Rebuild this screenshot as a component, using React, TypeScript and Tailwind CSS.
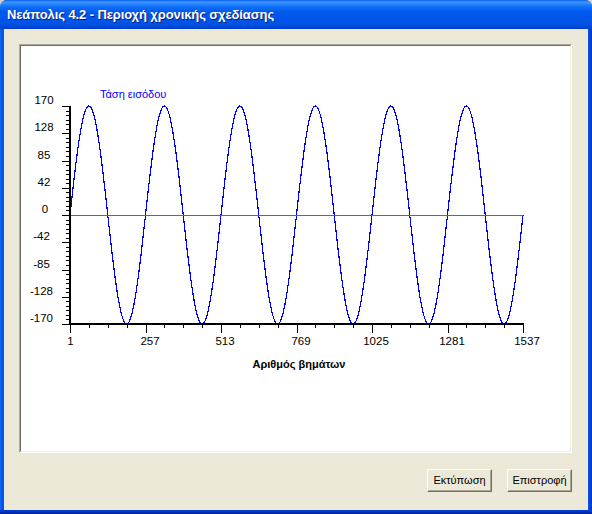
import React from "react";

const X0 = 70;
const X1 = 523;
const YT = 106;
const YB = 324;
const YZ = 215;

function Chart() {
  const pts: string[] = [];
  for (let n = 1; n <= 1537; n++) {
    const x = X0 + ((n - 1) * (X1 - X0)) / 1536;
    const y = YZ - 109 * Math.sin((2 * Math.PI * (n - 1)) / 256);
    pts.push(`${x.toFixed(2)},${y.toFixed(2)}`);
  }
  const yLabels = ["170", "128", "85", "42", "0", "-42", "-85", "-128", "-170"];
  const yStep = (YB - YT) / 8;
  const xLabels = ["1", "257", "513", "769", "1025", "1281", "1537"];
  const xStep = (X1 - X0) / 6;
  const yMinor: number[] = [];
  for (let i = 0; i <= 48; i++) yMinor.push(YT + (i * yStep) / 6);
  const xMinor: number[] = [];
  for (let i = 0; i <= 24; i++) xMinor.push(X0 + (i * xStep) / 4);

  return (
    <svg width={549} height={405} className="block font-['Liberation_Sans',Arial,sans-serif]">
      <g transform="translate(-21,-46)">
        <text x={100} y={98} fontSize={11} fill="#0000FF">
          Τάση εισόδου
        </text>
        {yMinor.map((y, i) => (
          <rect key={"ym" + i} x={66} y={Math.round(y)} width={4} height={1} fill="#000" />
        ))}
        {yLabels.map((l, i) => {
          const y = Math.round(YT + i * yStep);
          const cx = l.startsWith("-") ? 41.5 : l === "0" ? 45 : 44;
          return (
            <g key={"yl" + i}>
              <rect x={62} y={y} width={8} height={1} fill="#000" />
              <text x={cx} y={y - 2} fontSize={11.5} fill="#000" textAnchor="middle">
                {l}
              </text>
            </g>
          );
        })}
        {xMinor.map((x, i) => (
          <rect key={"xm" + i} x={Math.round(x)} y={325} width={1} height={3} fill="#000" />
        ))}
        {xLabels.map((l, i) => {
          const x = Math.round(X0 + i * xStep);
          return (
            <g key={"xl" + i}>
              <rect x={x} y={325} width={1} height={8} fill="#000" />
              <text x={l === "1" ? x + 0.5 : x + 4} y={345} fontSize={11.5} fill="#000" textAnchor="middle">
                {l}
              </text>
            </g>
          );
        })}
        <polyline points={pts.join(" ")} fill="none" stroke="#0000FF" strokeWidth={1.2} shapeRendering="crispEdges" />
        <rect x={70} y={215} width={453} height={1} fill="#FF00FF" />
        <rect x={69} y={YT} width={2} height={YB - YT + 1} fill="#000" />
        <rect x={69} y={323} width={455} height={2} fill="#000" />
        <text x={299} y={368} fontSize={11} fontWeight="bold" fill="#000" textAnchor="middle">
          Αριθμός βημάτων
        </text>
      </g>
    </svg>
  );
}

function XPButton({ children }: { children: React.ReactNode }) {
  return (
    <div className="w-[65px] h-[23px] border border-t-white border-l-white border-b-[#716F64] border-r-[#716F64] bg-[#ECE9D8]">
      <div className="w-full h-full border border-t-[#ECE9D8] border-l-[#ECE9D8] border-b-[#ACA899] border-r-[#ACA899] flex items-center justify-center text-[11px] text-black font-['Liberation_Sans',Arial,sans-serif]">
        {children}
      </div>
    </div>
  );
}

export default function App() {
  return (
    <div className="w-[592px] h-[514px] bg-[#D4D0C8]">
      <div className="w-[592px] h-[514px] flex flex-col rounded-t-[7px] overflow-hidden bg-[linear-gradient(to_right,#166AEE_0px,#0055EA_2px,#0055EA_588px,#0046D8_590px,#0030B0_592px)]">
        <div className="h-[29px] shrink-0 flex items-center pl-[7px] bg-[linear-gradient(to_bottom,#0A5FEE_0px,#3D95FF_2px,#2A86FF_4px,#0E6FF8_7px,#0058EE_12px,#0055E8_20px,#0052E2_25px,#0046D6_27px,#003CCB_29px)]">
          <span className="text-white font-bold text-[13px] tracking-[-0.1px] font-['Liberation_Sans',Arial,sans-serif] [text-shadow:1px_1px_0_#0A1E78] pt-[1px]">
            Νεάπολις 4.2 - Περιοχή χρονικής σχεδίασης
          </span>
        </div>
        <div className="flex-1 flex flex-col mx-[4px] bg-[#ECE9D8] pl-[15px] pr-[16px] pt-[15px]">
          <div className="w-[553px] h-[409px] border border-t-[#ACA899] border-l-[#ACA899] border-b-white border-r-white">
            <div className="w-full h-full border border-t-[#716F64] border-l-[#716F64] border-b-[#F1EFE2] border-r-[#F1EFE2] bg-white">
              <Chart />
            </div>
          </div>
          <div className="mt-[16px] flex justify-end gap-[15px]">
            <XPButton>Εκτύπωση</XPButton>
            <XPButton>Επιστροφή</XPButton>
          </div>
        </div>
        <div className="h-[4px] shrink-0 bg-[linear-gradient(to_bottom,#0040D8_0px,#0030C0_2px,#001E9A_4px)]" />
      </div>
    </div>
  );
}
